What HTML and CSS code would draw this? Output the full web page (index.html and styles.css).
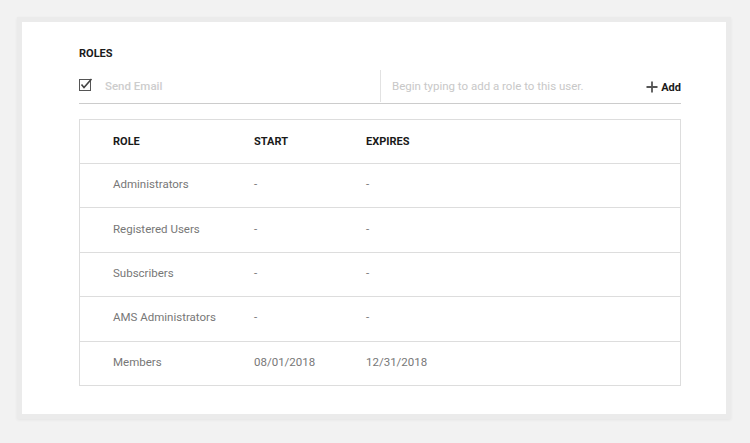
FILE: index.html
```html
<!DOCTYPE html>
<html lang="en">
<head>
  <meta charset="UTF-8" />
  <title>User Roles</title>
  <link rel="stylesheet" href="styles.css">
</head>
<body>

  <div class="card">
    <h4 class="section-title">ROLES</h4>

    <div class="role-form">
      <label class="send-email">
        <svg class="check" width="14" height="13" viewBox="0 0 14 13">
          <rect x="0.5" y="1.5" width="11" height="11" fill="none" stroke="#555" stroke-width="1"/>
          <path d="M2.5 6.5 L5 9.5 L12.5 1" fill="none" stroke="#444" stroke-width="1.6"/>
        </svg>
        <span>Send Email</span>
      </label>
      <div class="role-input">Begin typing to add a role to this user.</div>
      <button class="add-btn">
        <svg width="12" height="12" viewBox="0 0 12 12">
          <path d="M6 0.5 V11.5 M0.5 6 H11.5" stroke="#555" stroke-width="1.8"/>
        </svg>
        Add
      </button>
    </div>

    <div class="roles-table">
      <div class="row head">
        <div>ROLE</div>
        <div>START</div>
        <div>EXPIRES</div>
      </div>
      <div class="row">
        <div>Administrators</div>
        <div>-</div>
        <div>-</div>
      </div>
      <div class="row">
        <div>Registered Users</div>
        <div>-</div>
        <div>-</div>
      </div>
      <div class="row">
        <div>Subscribers</div>
        <div>-</div>
        <div>-</div>
      </div>
      <div class="row">
        <div>AMS Administrators</div>
        <div>-</div>
        <div>-</div>
      </div>
      <div class="row">
        <div>Members</div>
        <div>08/01/2018</div>
        <div>12/31/2018</div>
      </div>
    </div>
  </div>

</body>
</html>
```

FILE: styles.css
```css
body {
  margin: 0;
  padding: 17px;
  background: #f2f2f2;
  font-family: Roboto, 'Liberation Sans', sans-serif;
}

.card {
  width: 602px;
  height: 392px;
  padding: 0 45px 0 57px;
  background: #fff;
  border: 5px solid #ebebeb;
  box-shadow: 0 1px 3px rgba(0, 0, 0, 0.06);
}

.section-title {
  margin: 0;
  padding-top: 25px;
  font-size: 11px;
  font-weight: 700;
  line-height: 13px;
  color: #1a1a1a;
}

.role-form {
  display: flex;
  align-items: center;
  height: 34px;
  margin-top: 9px;
  border-bottom: 1px solid #ccc;
}

.send-email {
  display: flex;
  align-items: center;
  width: 301px;
  height: 32px;
  border-right: 1px solid #e2e2e2;
  font-size: 11.5px;
  font-weight: 500;
  color: #cdcdcd;
}

.check {
  margin-right: 12px;
  margin-top: -4px;
}

.role-input {
  flex: 1;
  padding-left: 11px;
  font-size: 11.5px;
  color: #c8c8c8;
}

.add-btn {
  display: flex;
  align-items: center;
  gap: 3px;
  padding: 0;
  margin-top: 2px;
  border: none;
  background: none;
  font-family: inherit;
  font-size: 11px;
  font-weight: 700;
  color: #1a1a1a;
}

.roles-table {
  margin-top: 15px;
  border: 1px solid #ddd;
}

.row {
  display: grid;
  grid-template-columns: 141px 112px 1fr;
  align-items: center;
  box-sizing: border-box;
  height: 44.4px;
  padding: 0 0 3px 33px;
  border-top: 1px solid #ddd;
  font-size: 11.5px;
  color: #777;
}

.row.head {
  height: 43px;
  padding-bottom: 0;
  border-top: none;
  font-size: 11px;
  font-weight: 700;
  color: #1a1a1a;
}
```
